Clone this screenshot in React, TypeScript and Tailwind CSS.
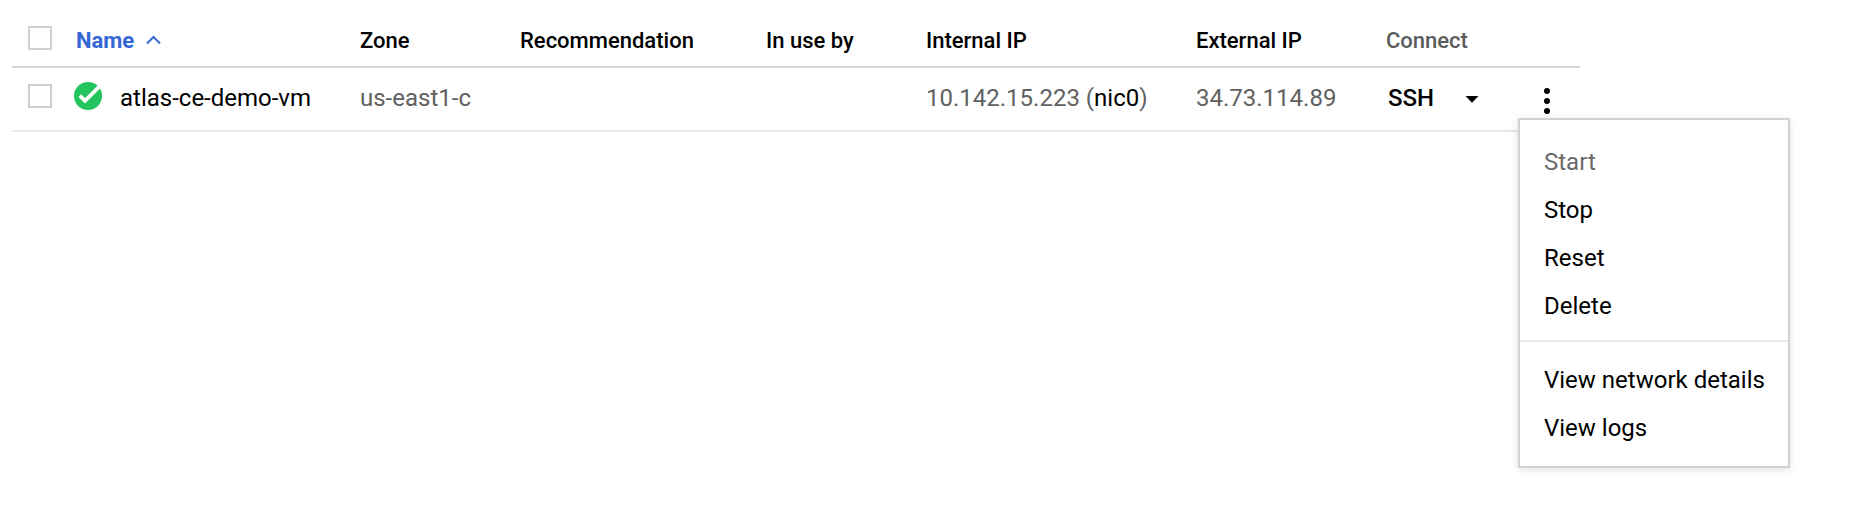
import type { ReactNode } from "react";

const columns =
  "grid grid-cols-[62px_286px_160px_246px_160px_270px_190px_194px] w-[1568px]";

function Checkbox({ label }: { label: string }) {
  return (
    <span
      role="checkbox"
      aria-checked="false"
      aria-label={label}
      className="block size-6 border-2 border-[#d1d1d1] bg-white"
    />
  );
}

function HeaderCell({ children }: { children: ReactNode }) {
  return <div className="text-black">{children}</div>;
}

function MenuItem({ children, disabled = false }: { children: ReactNode; disabled?: boolean }) {
  return (
    <li
      role="menuitem"
      className={
        disabled
          ? "h-12 pl-6 leading-[48px] text-[#6a6a6a]"
          : "h-12 pl-6 leading-[48px] text-black"
      }
    >
      {children}
    </li>
  );
}

function ActionsMenu() {
  return (
    <ul
      role="menu"
      className="absolute left-[-17px] top-[36px] z-10 h-[350px] w-[272px] whitespace-nowrap border-2 border-[#d1d1d1] bg-white pt-[18px] text-2xl shadow-[0_2px_8px_rgba(0,0,0,0.12)]"
    >
      <MenuItem disabled>Start</MenuItem>
      <MenuItem>Stop</MenuItem>
      <MenuItem>Reset</MenuItem>
      <MenuItem>Delete</MenuItem>
      <li role="separator" className="mb-[14px] mt-[10px] h-0.5 bg-[#e8e8e8]" />
      <MenuItem>View network details</MenuItem>
      <MenuItem>View logs</MenuItem>
    </ul>
  );
}

export default function App() {
  return (
    <main className="h-[510px] w-[1876px] overflow-hidden bg-white pl-3 font-['Roboto',sans-serif] text-black">
      <div
        className={`${columns} h-[68px] whitespace-nowrap border-b-2 border-[#d4d4d4] pt-[26px] text-[22px] font-medium leading-[29px]`}
      >
        <div className="pl-4">
          <Checkbox label="Select all" />
        </div>
        <div className="flex pl-0.5 text-[#3367d6]">
          <span className="w-[59px] font-bold">Name</span>
          <svg className="ml-[11px] mt-[9px] h-[10px] w-4" viewBox="0 0 16 10" fill="none">
            <path d="M1 8.5 7.5 2 14 8.5" stroke="#3367d6" strokeWidth="2" />
          </svg>
        </div>
        <HeaderCell>Zone</HeaderCell>
        <HeaderCell>Recommendation</HeaderCell>
        <HeaderCell>In use by</HeaderCell>
        <HeaderCell>Internal IP</HeaderCell>
        <HeaderCell>External IP</HeaderCell>
        <div className="text-[#5c5c5c]">Connect</div>
      </div>

      <div
        className={`${columns} h-16 whitespace-nowrap border-b-2 border-[#e8e8e8] pt-[14px] text-2xl leading-8 text-[#616161]`}
      >
        <div className="pl-4 pt-0.5">
          <Checkbox label="Select atlas-ce-demo-vm" />
        </div>
        <div className="flex text-black">
          <svg className="h-7 w-7" viewBox="0 0 28 28" fill="none">
            <circle cx="14" cy="14" r="14" fill="#22c55b" />
            <path d="m5.8 13.6 5.2 5.2L25.5 4.3" stroke="#fff" strokeWidth="3.8" />
          </svg>
          <span className="ml-[18px]">atlas-ce-demo-vm</span>
        </div>
        <div>us-east1-c</div>
        <div />
        <div />
        <div>
          10.142.15.223 (<span className="text-black">nic0</span>)
        </div>
        <div>34.73.114.89</div>
        <div className="flex text-black">
          <span className="w-[79px] pl-0.5 font-medium">SSH</span>
          <svg className="mt-[14px] h-[7px] w-[14px]" viewBox="0 0 14 7">
            <path d="M.5 0h13L7 6.7z" fill="#000" />
          </svg>
          <div className="relative ml-[56px] w-6">
            <svg className="mt-[6px] h-[26px] w-6" viewBox="0 0 24 26">
              <circle cx="12" cy="3" r="3" />
              <circle cx="12" cy="13" r="3" />
              <circle cx="12" cy="23" r="3" />
            </svg>
            <ActionsMenu />
          </div>
        </div>
      </div>
    </main>
  );
}
